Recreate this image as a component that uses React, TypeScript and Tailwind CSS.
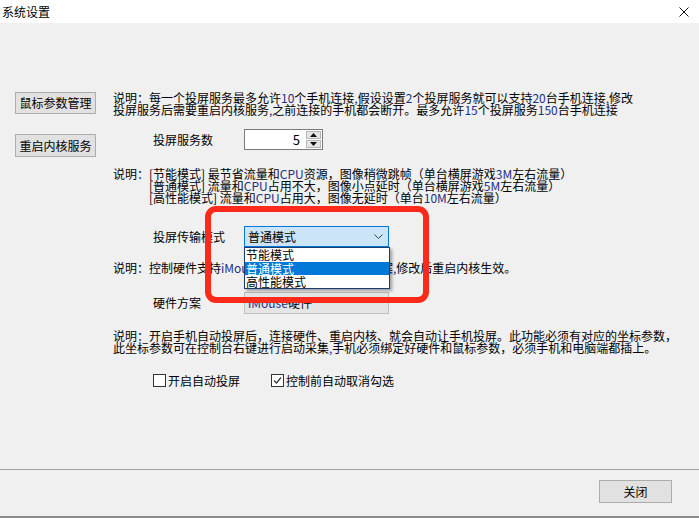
import type { ReactNode } from "react";

const font = { fontFamily: '"Noto Sans CJK SC", "Noto Sans", sans-serif' };

// latin runs in the win32 text show up dark blue (ClearType)
const N = ({ children }: { children: ReactNode }) => (
  <span className="text-[#1d2f86]">{children}</span>
);

const Btn = ({ children, className = "" }: { children: ReactNode; className?: string }) => (
  <div
    className={`flex items-center justify-center bg-[#e1e1e1] border border-[#adadad] text-[12px] leading-[12px] ${className}`}
  >
    {children}
  </div>
);

const Check = ({ checked }: { checked?: boolean }) => (
  <div className="w-[13px] h-[13px] border border-[#333] bg-white flex items-center justify-center">
    {checked && (
      <svg width="9" height="9" viewBox="0 0 9 9">
        <path d="M1 4.5 L3.5 7 L8 1.5" fill="none" stroke="#333" strokeWidth="1.2" />
      </svg>
    )}
  </div>
);

const App = () => {
  return (
    <div className="relative w-[699px] h-[518px] bg-[#f0f0f0] text-black overflow-hidden" style={font}>
      {/* title bar */}
      <div className="h-[23px] bg-white flex items-center justify-between pl-[2px] pr-[10px]">
        <span className="text-[12px] leading-[12px]">系统设置</span>
        <svg width="10" height="10" viewBox="0 0 10 10">
          <path d="M0.5 0.5 L9.5 9.5 M9.5 0.5 L0.5 9.5" stroke="#111" strokeWidth="1" />
        </svg>
      </div>

      {/* main */}
      <div className="h-[446px] flex pl-[15px] pt-[69px] gap-[17px] text-[12px] leading-[12px]">
        <div className="w-[81px] flex flex-col gap-[20px]">
          <Btn className="h-[22px]">鼠标参数管理</Btn>
          <Btn className="h-[23px]">重启内核服务</Btn>
        </div>

        <div className="flex flex-col whitespace-nowrap">
          <p>
            说明：每一个投屏服务最多允许<N>10</N>个手机连接<N>,</N>假设设置<N>2</N>个投屏服务就可以支持<N>20</N>台手机连接<N>,</N>修改
            <br />
            投屏服务后需要重启内核服务<N>,</N>之前连接的手机都会断开。最多允许<N>15</N>个投屏服务<N>150</N>台手机连接
          </p>

          <div className="flex items-center mt-[13px] h-[21px]">
            <span className="w-[131px] pl-[40px]">投屏服务数</span>
            <div className="w-[79px] h-[21px] bg-white border border-[#7a7a7a] flex items-center justify-end pr-[1px]">
              <span className="mr-[6px] text-[13px]">5</span>
              <div className="w-[15px] h-[17px] flex flex-col gap-[1px]">
                <div className="flex-1 bg-[#e5e5e5] border border-[#b5b5b5] flex items-center justify-center">
                  <svg width="7" height="4" viewBox="0 0 7 4"><path d="M0 4 L3.5 0 L7 4Z" fill="#111" /></svg>
                </div>
                <div className="flex-1 bg-[#e5e5e5] border border-[#b5b5b5] flex items-center justify-center">
                  <svg width="7" height="4" viewBox="0 0 7 4"><path d="M0 0 L3.5 4 L7 0Z" fill="#111" /></svg>
                </div>
              </div>
            </div>
          </div>

          <div className="flex mt-[18px]">
            <span>说明：</span>
            <p>
              [节能模式] 最节省流量和<N>CPU</N>资源，图像稍微跳帧（单台横屏游戏<N>3M</N>左右流量）
              <br />
              [普通模式] 流量和<N>CPU</N>占用不大，图像小点延时（单台横屏游戏<N>5M</N>左右流量）
              <br />
              [高性能模式] 流量和<N>CPU</N>占用大，图像无延时（单台<N>10M</N>左右流量）
            </p>
          </div>

          <div className="flex items-center mt-[22px] h-[21px]">
            <span className="w-[131px] pl-[40px]">投屏传输模式</span>
            <div className="relative">
              <div className="w-[145px] h-[21px] bg-[#cce4f7] border border-[#0078d7] flex items-center justify-between pl-[3px] pr-[5px]">
                <span>普通模式</span>
                <svg width="9" height="5" viewBox="0 0 9 5">
                  <path d="M0.5 0.5 L4.5 4.5 L8.5 0.5" fill="none" stroke="#444" strokeWidth="1" />
                </svg>
              </div>
              <div className="absolute left-0 top-[21px] w-[146px] bg-white border border-[#1e3c72] shadow-[2px_2px_3px_rgba(0,0,0,0.35)] z-10 flex flex-col">
                <div className="h-[14px] pl-[1px] flex items-center">节能模式</div>
                <div className="h-[13px] pl-[1px] flex items-center bg-[#0078d7] text-white">普通模式</div>
                <div className="h-[13px] pl-[1px] flex items-center">高性能模式</div>
              </div>
            </div>
          </div>

          <p className="mt-[15px]">
            说明：控制硬件支持<N>iMouse</N>硬件和键鼠硬件两种方案<N>,</N>修改后重启内核生效。
          </p>

          <div className="flex items-center mt-[18px] h-[22px]">
            <span className="w-[131px] pl-[40px]">硬件方案</span>
            <div className="w-[145px] h-[22px] bg-[#e5e5e5] border border-[#bfbfbf] flex items-center pl-[3px]">
              <N>iMouse</N>硬件
            </div>
          </div>

          <p className="mt-[16px]">
            说明：开启手机自动投屏后，连接硬件、重启内核、就会自动让手机投屏。此功能必须有对应的坐标参数，
            <br />
            此坐标参数可在控制台右键进行启动采集<N>,</N>手机必须绑定好硬件和鼠标参数，必须手机和电脑端都插上。
          </p>

          <div className="flex items-center mt-[20px] pl-[40px] h-[13px]">
            <Check />
            <span className="ml-[2px] w-[103px]">开启自动投屏</span>
            <Check checked />
            <span className="ml-[2px]">控制前自动取消勾选</span>
          </div>
        </div>
      </div>

      {/* footer */}
      <div className="h-[47px] border-t border-[#a0a0a0] flex justify-end pt-[10px] pr-[27px]">
        <Btn className="w-[73px] h-[23px]">关闭</Btn>
      </div>
      <div className="h-[2px] bg-[#8a8a8a]" />

      {/* red annotation box */}
      <div className="absolute left-[205px] top-[206px] w-[224px] h-[97px] border-[6px] border-[#fb2a1a] rounded-[11px] z-20 pointer-events-none" />
    </div>
  );
};

export default App;
